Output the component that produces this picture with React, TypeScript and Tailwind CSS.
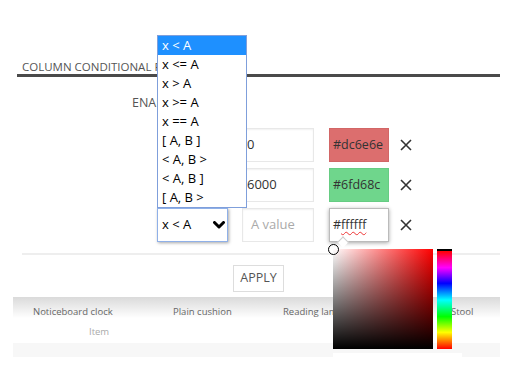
import React from "react";

const OPERATORS = ["x < A", "x <= A", "x > A", "x >= A", "x == A", "[ A, B ]", "< A, B >", "< A, B ]", "[ A, B >"];

type Rule = { value: string; placeholder?: string; color: string; tone: "red" | "green" | "open" };

const RULES: Rule[] = [
  { value: "0", color: "#dc6e6e", tone: "red" },
  { value: "6000", color: "#6fd68c", tone: "green" },
  { value: "", placeholder: "A value", color: "#ffffff", tone: "open" },
];

// ── Small glyphs ───────────────────────────────────────────────────────────
function Cross() {
  return (
    <svg width="12" height="12" viewBox="0 0 12 12" className="shrink-0">
      <path d="M1 1 L11 11 M11 1 L1 11" stroke="#333" strokeWidth="1.6" />
    </svg>
  );
}

function Chevron() {
  return (
    <svg width="12" height="8" viewBox="0 0 12 8">
      <path d="M1.5 1.5 L6 6 L10.5 1.5" fill="none" stroke="#000" strokeWidth="3" strokeLinecap="round" strokeLinejoin="round" />
    </svg>
  );
}

// ── Rule row ───────────────────────────────────────────────────────────────
function RuleRow({ rule, focused }: { rule: Rule; focused: boolean }) {
  return (
    <div className="flex items-center h-[34px]">
      <div
        className={
          focused
            ? "w-[71px] h-full flex items-center justify-between pl-[4px] pr-[2px] border border-[#8fb0e8] shadow-[1px_1px_3px_rgba(0,0,0,0.35)] bg-white"
            : "w-[71px] h-full flex items-center justify-between pl-[4px] pr-[2px] border border-[#e5e5e5] bg-white"
        }
      >
        <span className="text-[13px] text-black">x &lt; A</span>
        <Chevron />
      </div>
      <div className="ml-[14px] w-[72px] h-full flex items-center pl-[4px] border border-[#e8e8e8] shadow-[inset_0_1px_2px_rgba(0,0,0,0.06)] text-[13px] text-[#333]">
        {rule.value || <span className="pl-[4px] text-[#aaa]">{rule.placeholder}</span>}
      </div>
      {rule.tone === "open" ? (
        <div className="relative ml-[15px] w-[60px] h-full flex items-center pl-[3px] bg-white border border-[#bbb] shadow-[0_1px_4px_rgba(0,0,0,0.35)] text-[12.5px] text-[#333]">
          #<span className="underline decoration-wavy decoration-[#e33] decoration-1 underline-offset-2">ffffff</span>
          <div className="absolute left-[9px] -bottom-[5px] w-[8px] h-[8px] rotate-45 bg-white border-l border-t border-[#ccc]" />
        </div>
      ) : (
        <div
          className={
            rule.tone === "red"
              ? "ml-[15px] w-[60px] h-full flex items-center pl-[3px] bg-[#dc6e6e] border border-[#d26666] text-[12.5px] text-[#333]"
              : "ml-[15px] w-[60px] h-full flex items-center pl-[3px] bg-[#6fd68c] border border-[#66cc83] text-[12.5px] text-[#333]"
          }
        >
          {rule.color}
        </div>
      )}
      <div className="ml-[11px]">
        <Cross />
      </div>
    </div>
  );
}

export default function App() {
  return (
    <div className="relative w-[520px] h-[383px] overflow-hidden bg-white font-['Open_Sans',sans-serif]">
      {/* Heading */}
      <div className="pt-[59px] ml-[17px] w-[483px]">
        <div className="h-[15px] leading-[15px] pl-[5px] text-[11.5px] text-[#555] whitespace-nowrap">
          COLUMN CONDITIONAL FORMATTING
        </div>
        <div className="h-[3px] bg-[#4a4a4a]" />
      </div>

      {/* Enabled */}
      <div className="mt-[18px] h-[16px] leading-[16px] pl-[132px] text-[12.5px] text-[#555]">ENABLED</div>

      {/* Rules */}
      <div className="mt-[17px] pl-[157px] flex flex-col gap-[6px]">
        {RULES.map((r, i) => (
          <RuleRow key={i} rule={r} focused={i === 2} />
        ))}
      </div>

      <div className="mt-[11px] ml-[22px] w-[478px] h-[2px] bg-[#eee]" />

      {/* Apply */}
      <div className="mt-[10px] pl-[233px] flex">
        <button type="button" className="w-[51px] h-[27px] border border-[#ddd] bg-white text-[12.5px] text-[#555]">
          APPLY
        </button>
      </div>

      {/* Table */}
      <div className="mt-[5px] ml-[13px] w-[487px]">
        <div className="h-[25px] flex bg-[linear-gradient(to_bottom,#dadada,#ffffff_85%)] text-[9.5px] text-[#666] pt-[9px] leading-[12px] whitespace-nowrap">
          <div className="w-[140px] pl-[20px]">Noticeboard clock</div>
          <div className="w-[110px] pl-[20px]">Plain cushion</div>
          <div className="w-[168px] pl-[20px]">Reading lamp</div>
          <div className="flex-1 pl-[20px]">Stool</div>
        </div>
        <div className="h-[21px] flex items-center pl-[76px] text-[9.5px] text-[#aaa]">Item</div>
        <div className="h-[14px] bg-[#f7f7f7]" />
      </div>

      {/* Open select list */}
      <div className="absolute left-[157px] top-[35px] w-[90px] border border-[#7f9fdb] bg-white">
        {OPERATORS.map((op, i) => (
          <div
            key={op}
            className={
              i === 0
                ? "h-[19px] leading-[19px] pl-[4px] text-[13px] bg-[#1e90ff] text-white"
                : "h-[19px] leading-[19px] pl-[4px] text-[13px] text-black"
            }
          >
            {op}
          </div>
        ))}
      </div>

      {/* Colour picker */}
      <div className="absolute left-[333px] top-[249px] flex flex-col">
        <div className="flex gap-[4px]">
          <div className="relative w-[100px] h-[100px] bg-[linear-gradient(to_right,#fff,#f00)]">
            <div className="absolute inset-0 bg-[linear-gradient(to_bottom,transparent,#000)]" />
            <div className="absolute -left-[5px] -top-[5px] w-[11px] h-[11px] rounded-full border-[1.5px] border-black shadow-[inset_0_0_0_1px_#fff]" />
          </div>
          <div className="w-[15px] h-[100px] border-t-2 border-black bg-[linear-gradient(to_bottom,#f00_0%,#f0f_17%,#00f_33%,#0ff_50%,#0f0_67%,#ff0_83%,#f00_100%)]" />
        </div>
        <div className="mt-[4px] w-[129px] h-[5px] bg-white" />
      </div>
    </div>
  );
}
